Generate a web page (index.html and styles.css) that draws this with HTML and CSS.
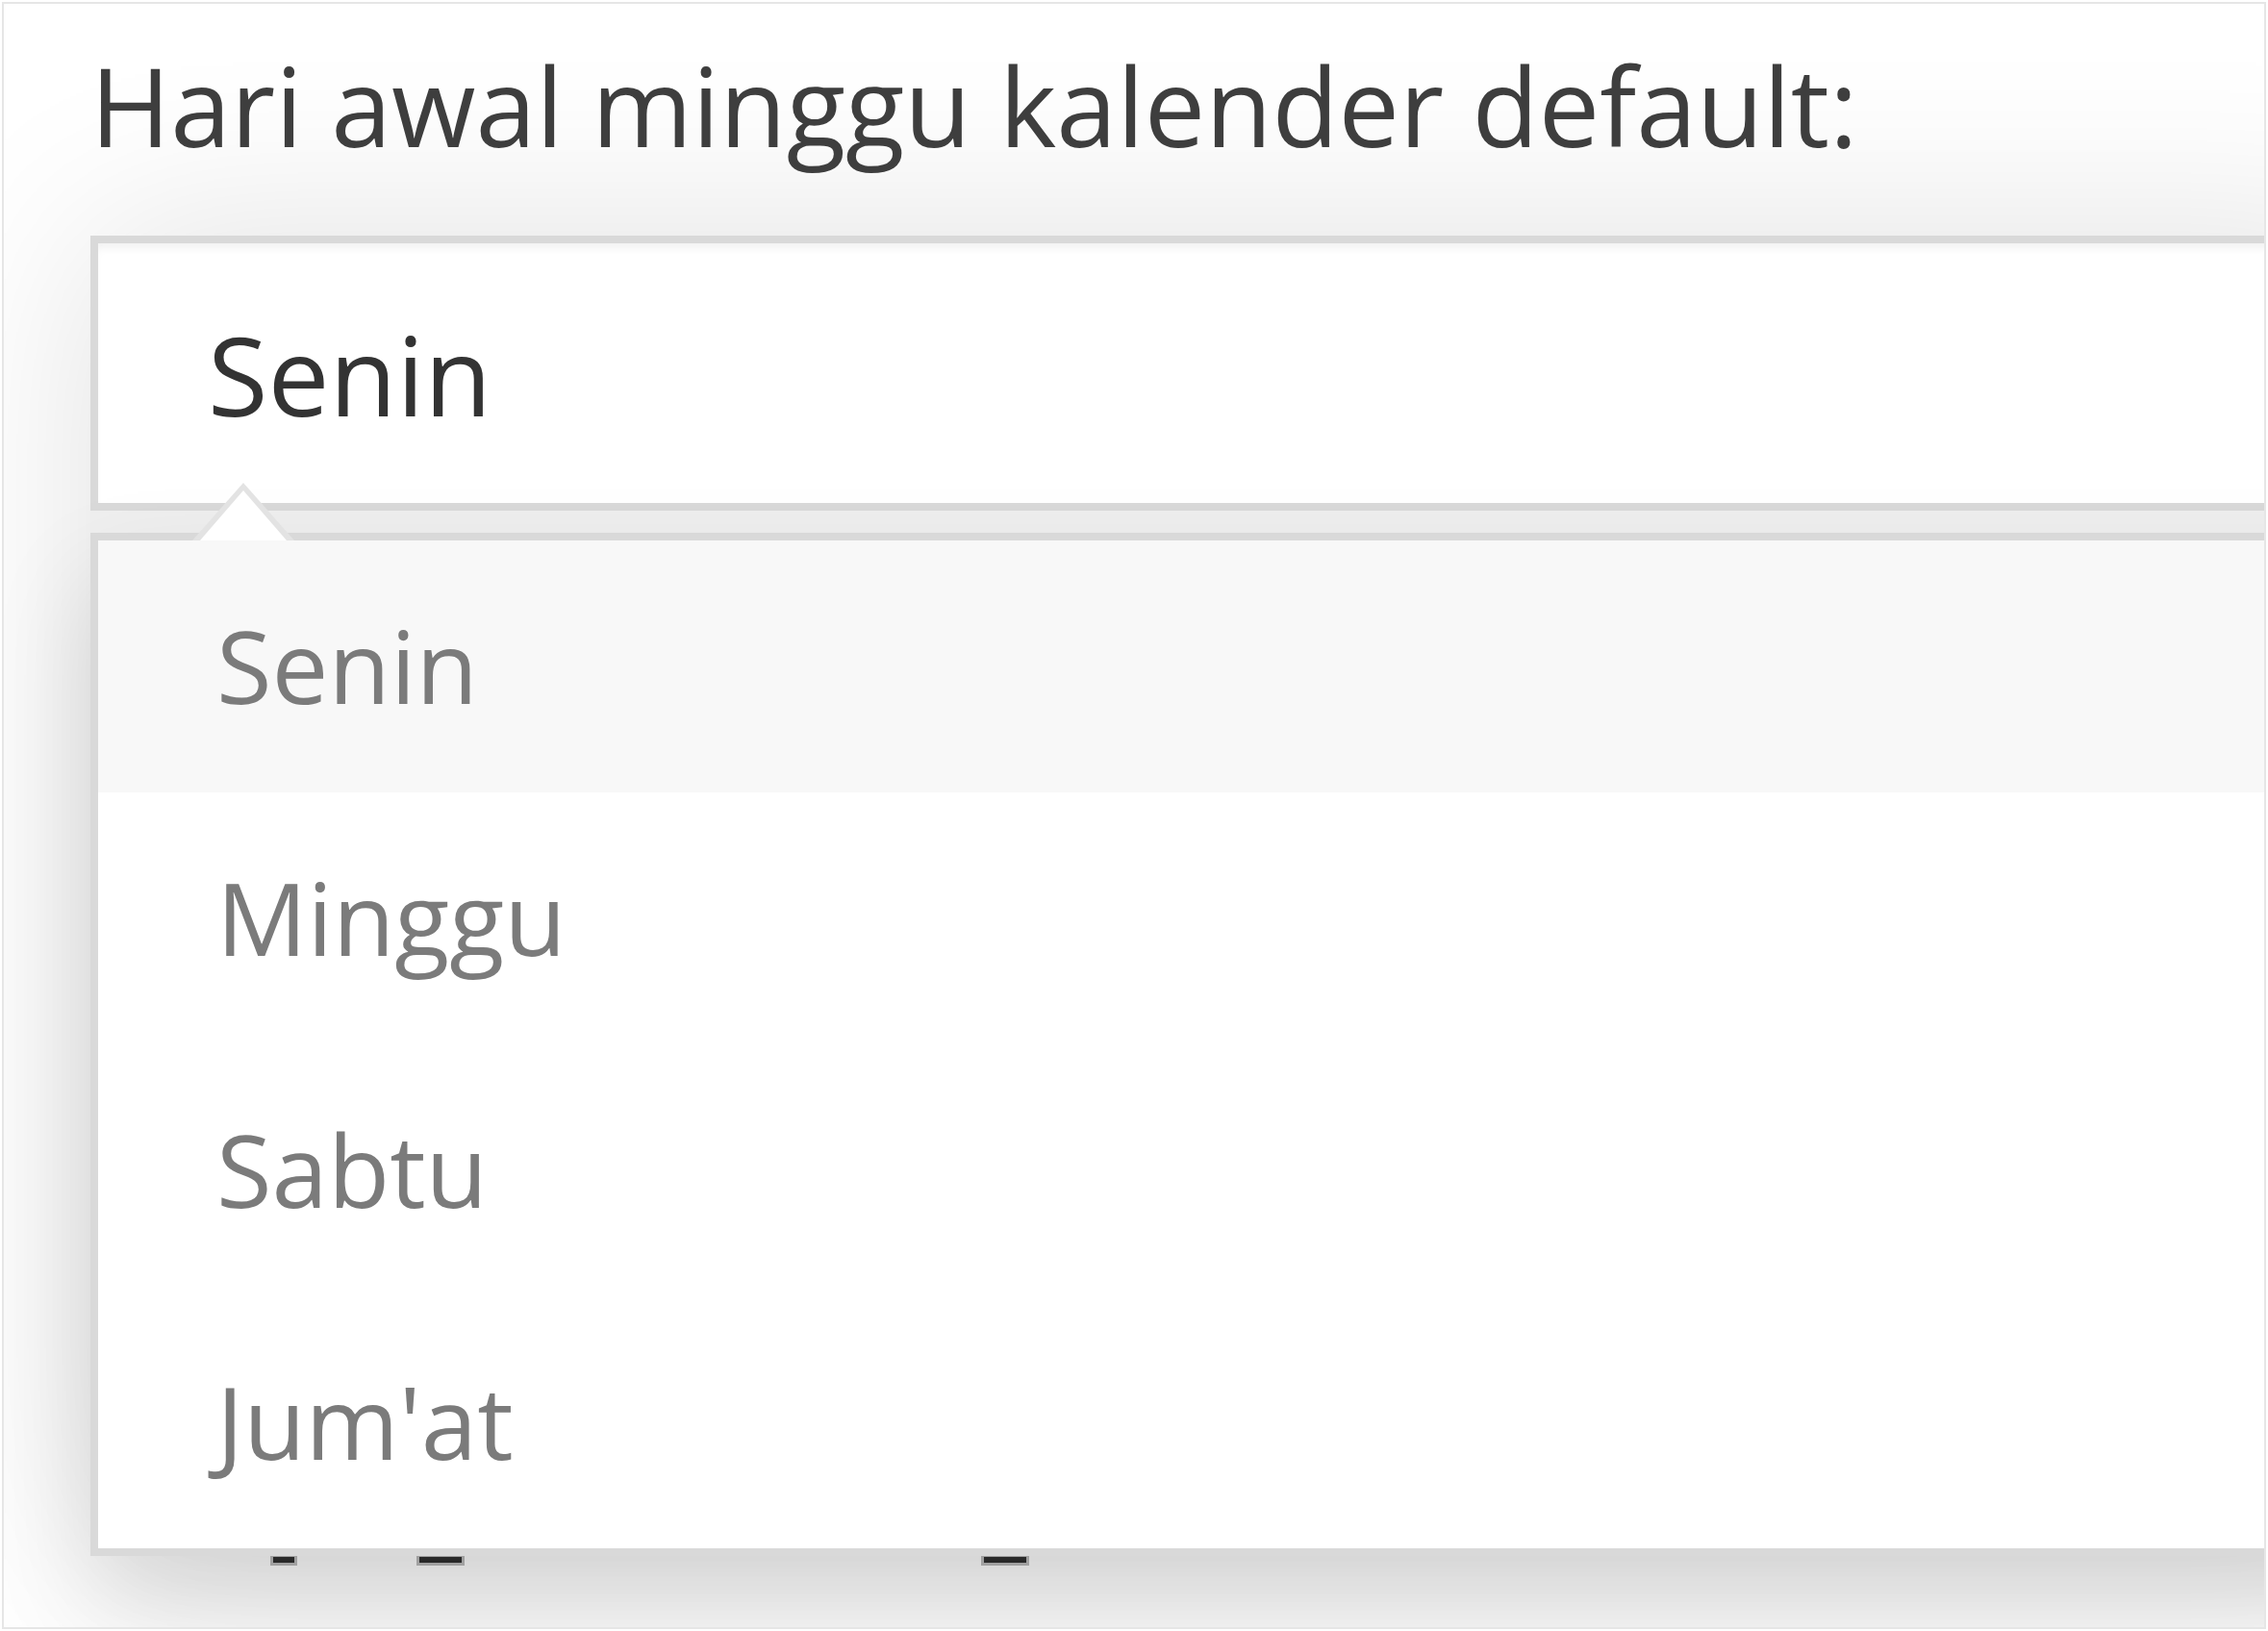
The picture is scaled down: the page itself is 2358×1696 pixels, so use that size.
FILE: index.html
```html
<!DOCTYPE html>
<html lang="id">
<head>
<meta charset="utf-8">
<title>Hari awal minggu kalender default</title>
<link rel="stylesheet" href="styles.css">
</head>
<body>
<div class="frame">
  <div class="label">Hari awal minggu kalender default:</div>
  <div class="combo">
    <div class="select">Senin</div>
    <div class="dropdown">
      <svg class="caret" viewBox="0 0 106 60" width="106" height="60" aria-hidden="true">
        <polygon points="53,0 0,60 106,60" fill="#e3e3e3"/>
        <polygon points="53,8 8,60 98,60" fill="#ffffff"/>
      </svg>
      <ul class="options">
        <li class="option is-active">Senin</li>
        <li class="option">Minggu</li>
        <li class="option">Sabtu</li>
        <li class="option">Jum'at</li>
      </ul>
    </div>
  </div>
  <div class="peek">
    <span class="mark mark-a"></span>
    <span class="mark mark-b"></span>
    <span class="mark mark-c"></span>
  </div>
</div>
</body>
</html>
```
FILE: styles.css
```css
html, body {
  margin: 0;
  padding: 0;
  background: #ffffff;
}

.frame {
  box-sizing: border-box;
  margin: 2px;
  width: 2354px;
  height: 1692px;
  border: 2px solid #e6e6e6;
  background: #ffffff;
  overflow: hidden;
  padding: 28px 0 0 90px;
  font-family: "Open Sans", "Noto Sans", sans-serif;
}

.label {
  font-size: 113px;
  line-height: 155px;
  color: #3e3e3e;
  white-space: nowrap;
}

.combo {
  margin-top: 58px;
  width: 2400px;
  display: flex;
  flex-direction: column;
  gap: 23px;
  background: #efefef;
  box-shadow: 0 0 190px rgba(0, 0, 0, 0.12);
}

.select {
  box-sizing: border-box;
  height: 286px;
  border: 8px solid #d9d9d9;
  background: #ffffff;
  box-shadow: inset 0 8px 9px -3px rgba(0, 0, 0, 0.06);
  padding: 58px 0 0 114px;
  font-size: 114px;
  line-height: 155px;
  color: #333333;
}

.dropdown {
  position: relative;
  border: 8px solid #d9d9d9;
  background: #ffffff;
  box-shadow: 0 50px 100px rgba(0, 0, 0, 0.12);
}

.caret {
  position: absolute;
  left: 98px;
  top: -60px;
  display: block;
}

.options {
  list-style: none;
  margin: 0;
  padding: 0;
}

.option {
  box-sizing: border-box;
  height: 262px;
  padding: 57px 0 0 123px;
  font-size: 105px;
  line-height: 146px;
  color: #7b7b7b;
}

.option.is-active {
  background: #f8f8f8;
}

.peek {
  display: flex;
  height: 10px;
  margin-top: 1px;
}

.mark {
  display: block;
  height: 6px;
  background: #2e2e2e;
  box-shadow: 0 0 0 3px rgba(60, 60, 60, 0.35);
}

.mark-a {
  margin-left: 190px;
  width: 22px;
}

.mark-b {
  margin-left: 130px;
  width: 44px;
}

.mark-c {
  margin-left: 543px;
  width: 44px;
}
```
